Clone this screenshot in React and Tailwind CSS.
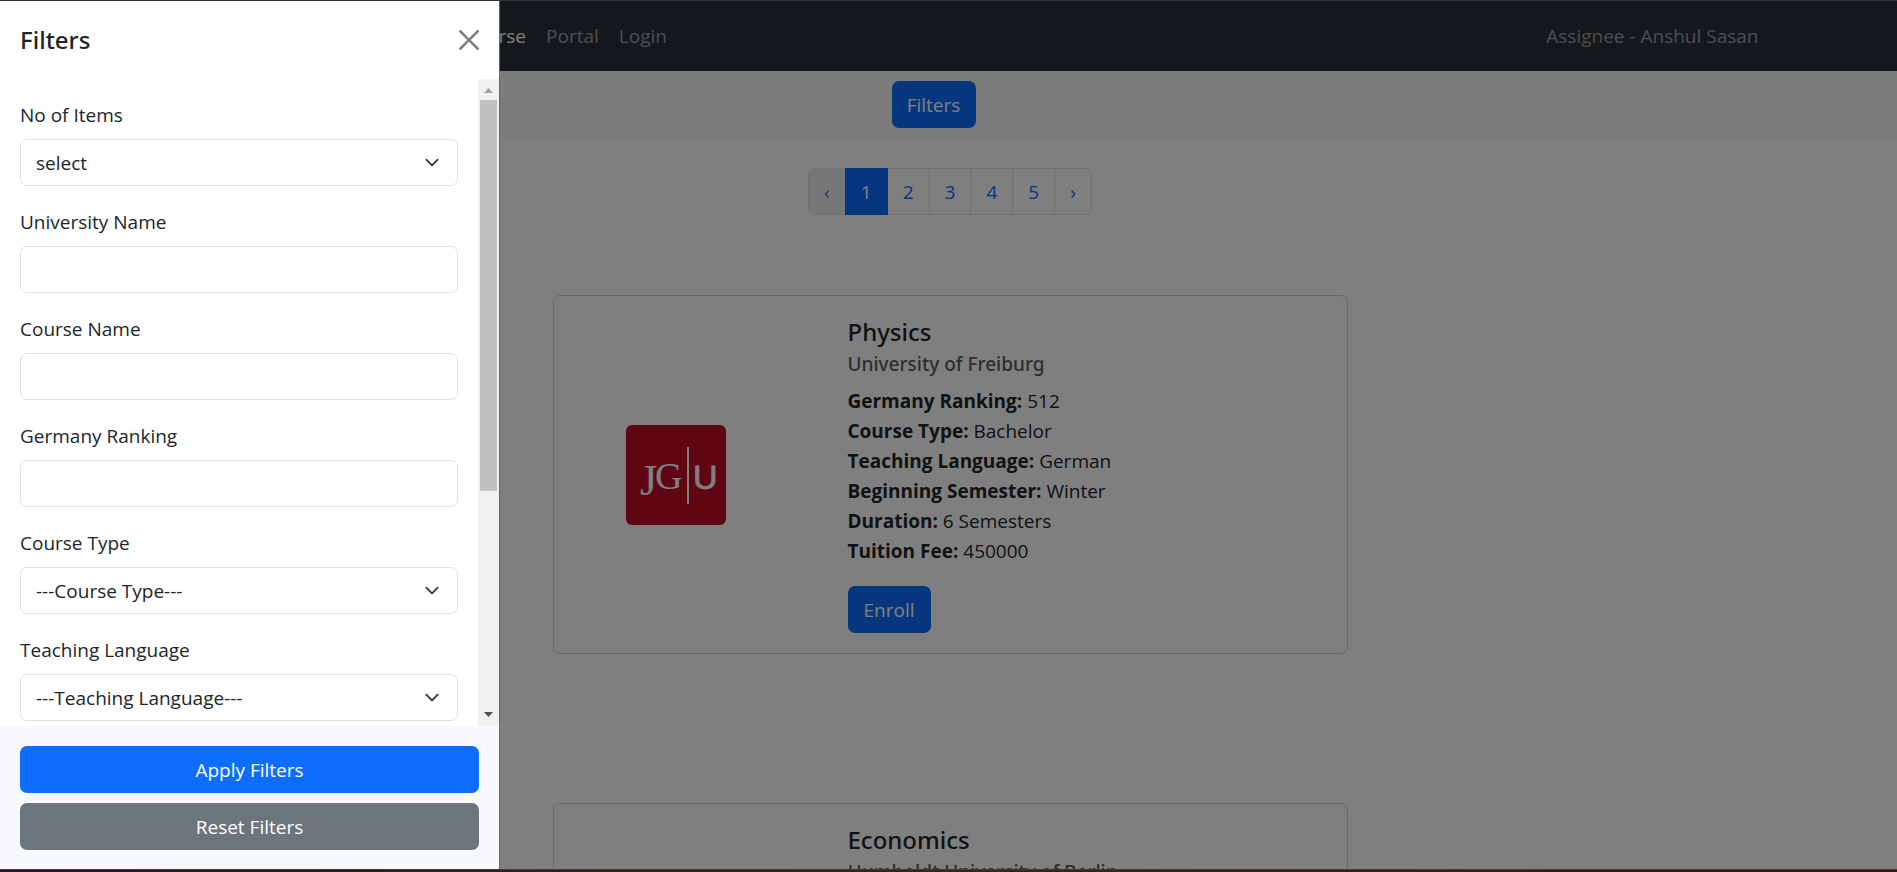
const courses = [
  {
    name: 'Physics',
    university: 'University of Freiburg',
    details: [
      ['Germany Ranking', '512'],
      ['Course Type', 'Bachelor'],
      ['Teaching Language', 'German'],
      ['Beginning Semester', 'Winter'],
      ['Duration', '6 Semesters'],
      ['Tuition Fee', '450000'],
    ],
  },
  {
    name: 'Economics',
    university: 'Humboldt University of Berlin',
    details: [],
  },
];

const fields = [
  { id: 'items', label: 'No of Items', option: 'select' },
  { id: 'university', label: 'University Name' },
  { id: 'course', label: 'Course Name' },
  { id: 'ranking', label: 'Germany Ranking' },
  { id: 'type', label: 'Course Type', option: '---Course Type---' },
  { id: 'language', label: 'Teaching Language', option: '---Teaching Language---' },
];

function Navbar() {
  return (
    <nav className="h-[70px] shrink-0 bg-[#293137]">
      <div className="mx-auto flex h-full max-w-[1650px] items-center justify-between px-[15px] leading-[30px]">
        <div className="ml-[325px] flex gap-5">
          <a href="#course" className="text-white">Course</a>
          <a href="#portal" className="text-[#9a9da0]">Portal</a>
          <a href="#login" className="text-[#9a9da0]">Login</a>
        </div>
        <span className="text-[#9a9da0]">Assignee - Anshul Sasan</span>
      </div>
    </nav>
  );
}

function Pagination() {
  const page = 'flex h-[47px] items-center justify-center border px-[15px] ';
  return (
    <ul className="mt-[30px] flex justify-center -space-x-px pl-[3px]">
      <li><button className={page + 'rounded-l-[7px] border-[#dee2e6] bg-[#e9ecef] text-[#6c757d]'} disabled>‹</button></li>
      <li className="relative"><button className={page + 'border-[#0d6efd] bg-[#0d6efd] text-white'}>1</button></li>
      {['2', '3', '4', '5'].map((n) => (
        <li key={n}><button className={page + 'border-[#dee2e6] text-[#0d6efd]'}>{n}</button></li>
      ))}
      <li><button className={page + 'rounded-r-[7px] border-[#dee2e6] text-[#0d6efd]'}>›</button></li>
    </ul>
  );
}

function Logo() {
  return (
    <svg width="100" height="100" viewBox="0 0 100 100" role="img" aria-label="JGU">
      <rect width="100" height="100" rx="6" fill="#c00a24" />
      <text x="14" y="70" fontFamily="Liberation Serif, serif" fontSize="44" fill="#fff">J</text>
      <text x="29" y="64" fontFamily="Liberation Serif, serif" fontSize="38" fill="#fff">G</text>
      <rect x="61" y="22" width="2" height="57" fill="#fff" />
      <text x="67" y="64" fontFamily="Liberation Sans, sans-serif" fontSize="34" fill="#fff" stroke="#fff" strokeWidth="0.8">U</text>
    </svg>
  );
}

function CourseCard({ course }) {
  return (
    <article className="flex min-h-[359px] w-[795px] shrink-0 rounded-[7px] border border-[#d3d3d4] bg-white">
      <div className="flex w-[244px] items-center justify-center">
        {course.details.length > 0 && <Logo />}
      </div>
      <div className="ml-[30px] p-5">
        <h5 className="font-['Noto_Sans',sans-serif] text-2xl leading-8 font-medium">{course.name}</h5>
        <h6 className="mt-1 mb-2.5 font-['Noto_Sans',sans-serif] leading-6 font-medium text-[#595c5f]">{course.university}</h6>
        {course.details.map(([label, value]) => (
          <p key={label} className="leading-[30px]"><b>{label}:</b> {value}</p>
        ))}
        {course.details.length > 0 && (
          <button className="mt-5 h-[47px] rounded-[7px] bg-[#0d6efd] px-4 text-white">Enroll</button>
        )}
      </div>
    </article>
  );
}

function Field({ field }) {
  const box = 'h-[47px] w-full appearance-none rounded-[7px] border border-[#dee2e6] bg-white px-[15px] outline-none';
  return (
    <div className="mb-5">
      <label htmlFor={field.id} className="mb-2 block leading-8">{field.label}</label>
      {field.option ? (
        <div className="relative">
          <select id={field.id} className={box}>
            <option>{field.option}</option>
          </select>
          <svg className="pointer-events-none absolute inset-y-0 right-4 my-auto" width="20" height="15" viewBox="0 0 16 16" fill="none" stroke="#343a40" strokeWidth="2" strokeLinecap="round" strokeLinejoin="round">
            <path d="m2 5 6 6 6-6" />
          </svg>
        </div>
      ) : (
        <input id={field.id} type="text" className={box} />
      )}
    </div>
  );
}

function ScrollTrack() {
  return (
    <div className="flex w-[21px] shrink-0 flex-col items-center bg-[#f1f1f1]" aria-hidden="true">
      <svg className="h-[21px] shrink-0" width="9" viewBox="0 0 9 21"><path d="M0 14 4.500 9 9 14z" fill="#a3a3a3" /></svg>
      <div className="h-[391px] w-[17px] bg-[#c1c1c1]" />
      <svg className="mt-auto h-[21px] shrink-0" width="9" viewBox="0 0 9 21"><path d="M0 7 4.500 12 9 7z" fill="#505050" /></svg>
    </div>
  );
}

function FilterDrawer() {
  return (
    <aside className="fixed top-px bottom-[3px] left-0 flex w-[500px] flex-col border-r border-[#666] bg-white">
      <header className="flex h-[78px] shrink-0 items-center justify-between px-5">
        <h5 className="font-['Noto_Sans',sans-serif] text-2xl leading-[38px] font-medium">Filters</h5>
        <button aria-label="Close" className="opacity-50">
          <svg width="20" height="20" viewBox="0 0 16 16">
            <path d="M.293.293a1 1 0 0 1 1.414 0L8 6.586 14.293.293a1 1 0 1 1 1.414 1.414L9.414 8l6.293 6.293a1 1 0 0 1-1.414 1.414L8 9.414l-6.293 6.293a1 1 0 0 1-1.414-1.414L6.586 8 .293 1.707a1 1 0 0 1 0-1.414z" />
          </svg>
        </button>
      </header>
      <div className="flex min-h-0 flex-1">
        <form className="flex-1 overflow-hidden p-5">
          {fields.map((field) => <Field key={field.id} field={field} />)}
        </form>
        <ScrollTrack />
      </div>
      <footer className="flex h-[143px] shrink-0 flex-col gap-2.5 bg-[#f8f9fc] px-5 pt-5">
        <button className="h-[47px] rounded-[7px] bg-[#0d6efd] text-white">Apply Filters</button>
        <button className="h-[47px] rounded-[7px] bg-[#6c757d] text-white">Reset Filters</button>
      </footer>
    </aside>
  );
}

export default function App() {
  return (
    <div className="h-screen overflow-hidden bg-white font-['Open_Sans','Noto_Sans',sans-serif] text-[19px] leading-[30px] text-[#212529]">
      <div className="flex h-full flex-col overflow-hidden pt-px">
        <Navbar />
        <div className="flex h-[67px] shrink-0 justify-center bg-[#f8f9fa] pt-2.5 pr-[30px]">
          <button className="h-[47px] w-[84px] rounded-[7px] bg-[#0d6efd] text-white">Filters</button>
        </div>
        <Pagination />
        <main className="mt-20 flex flex-col items-center gap-[149px] pl-[3px]">
          {courses.map((course) => <CourseCard key={course.name} course={course} />)}
        </main>
      </div>
      <div className="fixed inset-0 bg-black/50" />
      <FilterDrawer />
      <div className="fixed inset-x-0 top-0 h-px bg-[#333]" />
      <div className="fixed inset-x-0 bottom-0 h-[3px] border-t border-[#463a3a] bg-linear-to-r from-[#2a1522] via-[#30281a] to-[#3a1216]" />
    </div>
  );
}
